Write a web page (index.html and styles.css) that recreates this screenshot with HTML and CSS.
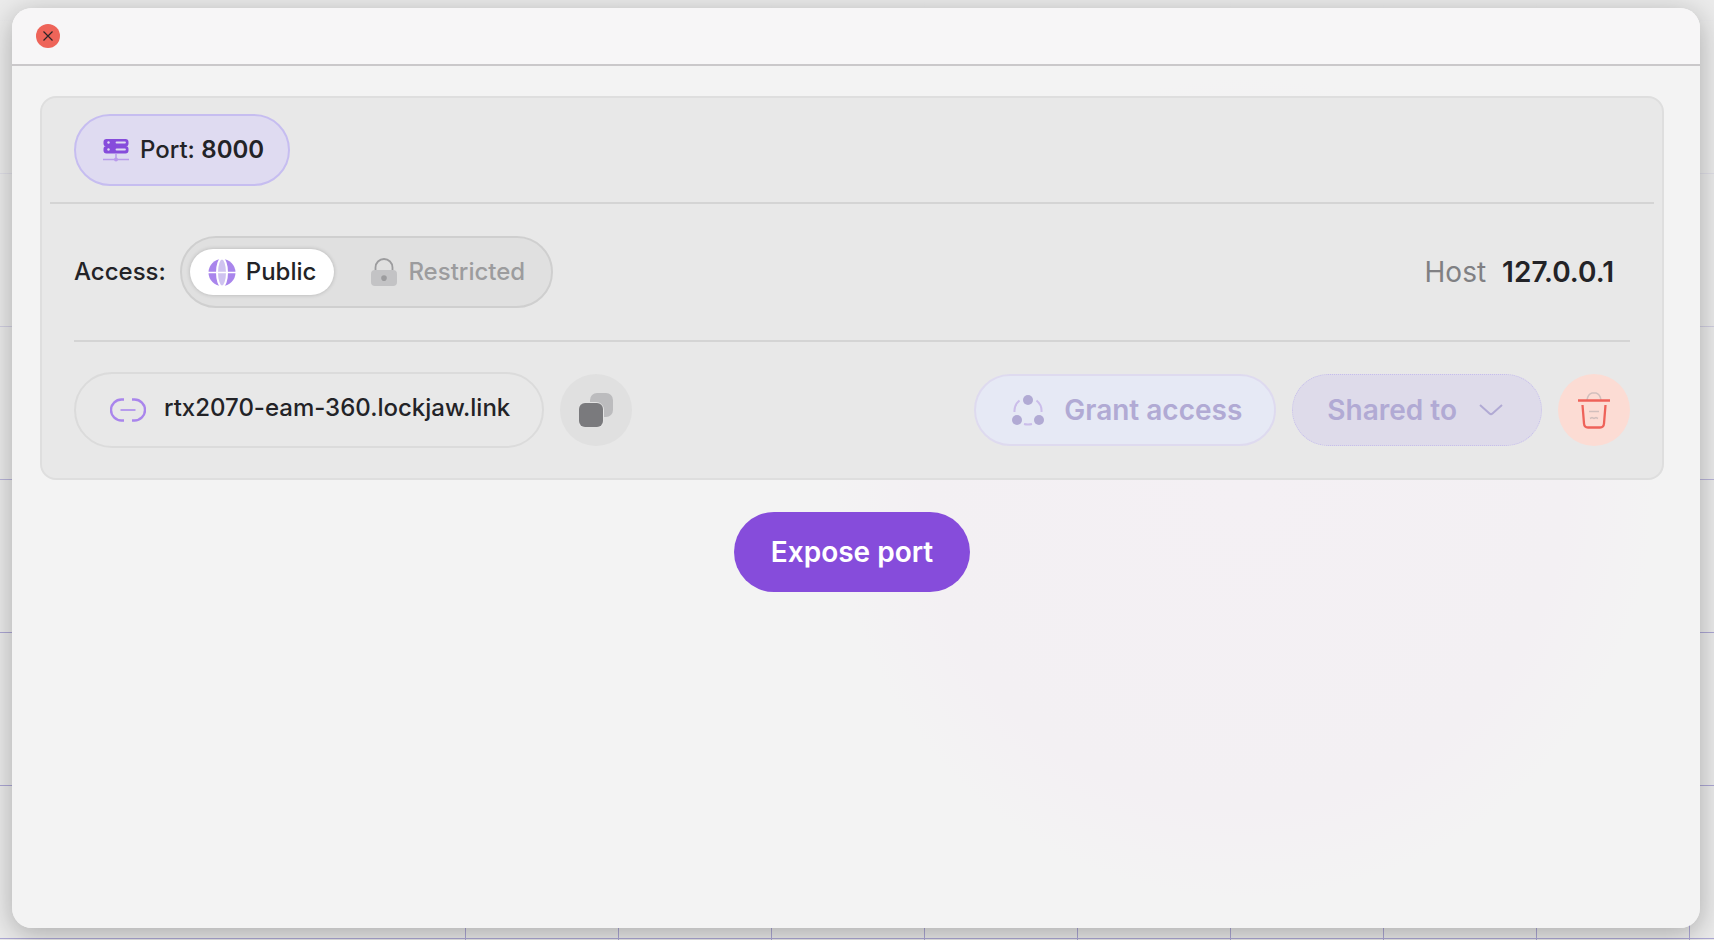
FILE: index.html
```html
<!DOCTYPE html>
<html lang="en">
<head>
<meta charset="utf-8">
<meta name="viewport" content="width=device-width, initial-scale=1">
<title>Exposed ports</title>
<link rel="stylesheet" href="styles.css">
</head>
<body>
<main class="window">
  <header class="titlebar">
    <button class="close" type="button" aria-label="Close">
      <svg viewBox="0 0 24 24" aria-hidden="true"><path d="M7.500 7.500L16.500 16.500M16.500 7.500L7.500 16.500"/></svg>
    </button>
  </header>
  <div class="content">
    <section class="card">
      <div class="port-row">
        <div class="port">
          <svg class="icon-server" viewBox="0 0 28 24" aria-hidden="true">
            <rect x="1.500" y="1" width="25" height="7.500" rx="3" fill="#864cdb"/>
            <rect x="1.500" y="8" width="25" height="7.500" rx="3" fill="#864cdb"/>
            <path d="M14.500 4.500H23M14.500 11.500H23" stroke="#dfdbf1" stroke-width="1.800" stroke-linecap="round"/>
            <circle cx="6.500" cy="4.500" r="1.200" fill="#dfdbf1"/><circle cx="6.500" cy="11.500" r="1.200" fill="#dfdbf1"/>
            <path d="M1 21.500h26M14 16v4" fill="none" stroke="#b99aeb" stroke-width="1.500"/>
            <circle cx="14" cy="21.500" r="2" fill="#b99aeb"/>
          </svg>
          <span>Port: <strong>8000</strong></span>
        </div>
      </div>
      <div class="access-row">
        <span class="access-label" id="access-label">Access:</span>
        <div class="toggle" role="group" aria-labelledby="access-label">
          <button class="option option-on" type="button" aria-pressed="true">
            <svg class="icon-globe" viewBox="0 0 28 28" aria-hidden="true">
              <circle cx="14" cy="14.500" r="13.500" fill="#a985ec"/>
              <ellipse cx="14" cy="14.500" rx="5" ry="14" fill="#cfc3f0" stroke="#fff" stroke-width="2"/>
              <path d="M0 14.500h28" stroke="#fff" stroke-width="1.500"/>
            </svg>
            Public
          </button>
          <button class="option" type="button" aria-pressed="false">
            <svg class="icon-lock" viewBox="0 0 28 28" aria-hidden="true">
              <path d="M5.500 12V9.500a8.500 8.500 0 0 1 17 0V12" fill="none" stroke="#9c9c9e" stroke-width="1.800"/>
              <rect x="1" y="12" width="26" height="16" rx="4" fill="#c3c3c5"/>
              <circle cx="14" cy="20" r="2.800" fill="#9c9c9e"/><path d="M12.500 20h3v3h-3z" fill="#9c9c9e"/>
            </svg>
            Restricted
          </button>
        </div>
        <p class="host">Host <strong>127.0.0.1</strong></p>
      </div>
      <div class="link-row">
        <a class="link" href="#">
          <svg class="icon-link" viewBox="0 0 36 24" aria-hidden="true">
            <path d="M14 1.500h-2.500a10.500 10.500 0 0 0 0 21H14M22 1.500h2.500a10.500 10.500 0 0 1 0 21H22" fill="none" stroke="#a985ec" stroke-width="2.400"/>
            <path d="M10.500 12h15" stroke="#b79cec" stroke-width="2"/>
          </svg>
          <span>rtx2070-eam-360.lockjaw.link</span>
        </a>
        <button class="round copy" type="button" aria-label="Copy link">
          <svg viewBox="0 0 34 34" aria-hidden="true">
            <rect x="11" y="0" width="23" height="24" rx="7" fill="#bcbcbe"/>
            <rect x="-1" y="9" width="26" height="27" rx="8" fill="#e4e4e4"/>
            <rect x="0" y="10" width="24" height="24" rx="6" fill="#7a7a7d"/>
          </svg>
        </button>
        <div class="actions">
          <button class="pill grant" type="button">
            <svg class="icon-share" viewBox="0 0 32 32" aria-hidden="true">
              <path d="M2.500 18a13.500 13.500 0 0 1 5-11.500M24.500 6.500a13.500 13.500 0 0 1 5 11.500M12 30q4 1 8 0" fill="none" stroke="#cbbdea" stroke-width="2"/>
              <g fill="#b1aad4"><circle cx="16" cy="6" r="5"/><circle cx="5" cy="26" r="5"/><circle cx="27" cy="26" r="5"/></g>
            </svg>
            Grant access
          </button>
          <button class="pill shared" type="button" aria-haspopup="true">
            Shared to
            <svg class="icon-chevron" viewBox="0 0 24 12" aria-hidden="true"><path d="M1 1L10.500 9.500Q12 10.800 13.500 9.500L23 1" fill="none" stroke="#b1aad4" stroke-width="2"/></svg>
          </button>
          <button class="round trash" type="button" aria-label="Delete">
            <svg viewBox="0 0 36 38" aria-hidden="true">
              <path d="M11 9q1-6 5-7h4q4 1 5 7M13 20.500h10M14 27.500l2-1 2 1 2-1 2 1" fill="none" stroke="#d2bfbd" stroke-width="1.500"/>
              <path d="M2 9.500h32M6.500 14L8 32.500q.3 4 4 4h12q3.700 0 4-4L29.500 14" fill="none" stroke="#ee6259" stroke-width="2.300"/>
            </svg>
          </button>
        </div>
      </div>
    </section>
    <button class="expose" type="button">Expose port</button>
  </div>
</main>
</body>
</html>
```
FILE: styles.css
```css
* {
  box-sizing: border-box;
}

body {
  margin: 0;
  min-height: 100vh;
  display: flex;
  padding: 8px 14px 12px 12px;
  font-family: Inter, "Liberation Sans", sans-serif;
  font-size: 24px;
  line-height: 32px;
  color: #232327;
  background-color: #ebebeb;
  background-image:
    linear-gradient(to bottom, #ebebeb 0, rgba(235, 235, 235, 0.7) 30%, rgba(235, 235, 235, 0) 60%),
    repeating-linear-gradient(to right, #aca7d4 0 1px, transparent 1px 153px),
    repeating-linear-gradient(to bottom, #aca7d4 0 1px, transparent 1px 153px);
  background-position: 0 0, 465px 0, 0 20px;
  background-repeat: no-repeat;
}

button {
  margin: 0;
  padding: 0;
  border: 0;
  font: inherit;
  color: inherit;
  background: none;
  cursor: pointer;
}

svg {
  display: block;
  flex: none;
}

strong {
  font-weight: 600;
}

.window {
  flex: 1;
  border-radius: 20px;
  overflow: hidden;
  background: radial-gradient(circle at 1232px 480px, #f4f0f4 0, #f3f0f3 320px, #f3f3f3 410px);
  box-shadow: 0 6px 28px rgba(0, 0, 0, 0.28);
}

.titlebar {
  height: 58px;
  padding: 16px 24px;
  border-bottom: 2px solid #cac8ca;
  background: #f7f6f7;
}

.close {
  display: block;
  width: 24px;
  height: 24px;
  border-radius: 50%;
  background: #ee6459;
}

.close svg {
  width: 24px;
  height: 24px;
  fill: none;
  stroke: #2c2427;
  stroke-width: 1.2;
}

.content {
  display: flex;
  flex-direction: column;
  gap: 32px;
  padding: 30px 36px 30px 28px;
}

.card {
  border: 2px solid #dedede;
  border-radius: 16px;
  background: #e8e8e8;
}

.port-row {
  margin: 0 8px;
  padding: 16px 24px;
  border-bottom: 2px solid #d4d4d4;
}

.port {
  display: inline-flex;
  align-items: center;
  vertical-align: top;
  gap: 10px;
  height: 72px;
  padding: 0 24px 0 26px;
  border: 2px solid #c6bdf0;
  border-radius: 36px;
  font-weight: 500;
  background: #dfdbf1;
}

.icon-server {
  width: 28px;
  height: 24px;
}

.access-row {
  display: flex;
  align-items: center;
  margin: 0 32px;
  padding: 32px 16px 32px 0;
  border-bottom: 2px solid #d4d4d4;
}

.access-label {
  font-weight: 500;
}

.toggle {
  display: flex;
  align-items: center;
  gap: 18px;
  height: 72px;
  margin-left: 14px;
  padding: 0 8px;
  border: 2px solid #cfcfcf;
  border-radius: 36px;
  background: #e0e0e0;
}

.option {
  display: flex;
  align-items: center;
  gap: 10px;
  height: 46px;
  padding: 0 18px;
  border-radius: 23px;
  font-weight: 500;
  color: #9c9c9e;
}

.option-on {
  color: #232327;
  background: #fff;
  box-shadow: 0 0 4px rgba(0, 0, 0, 0.2);
}

.icon-globe,
.icon-lock {
  width: 28px;
  height: 28px;
}

.host {
  display: flex;
  gap: 16px;
  margin: 0 0 0 auto;
  font-size: 28px;
  color: #808083;
}

.host strong {
  color: #232327;
}

.link-row {
  display: flex;
  align-items: center;
  gap: 16px;
  padding: 30px 32px;
}

.link {
  display: flex;
  align-items: center;
  gap: 18px;
  height: 76px;
  padding: 0 32px 0 34px;
  border: 2px solid #dbdbdb;
  border-radius: 38px;
  font-weight: 500;
  color: inherit;
  text-decoration: none;
}

.link span {
  padding-bottom: 4px;
}

.icon-link {
  width: 36px;
  height: 24px;
}

.round {
  display: grid;
  place-items: center;
  width: 72px;
  height: 72px;
  border-radius: 50%;
}

.copy {
  background: #e0e0e0;
}

.copy svg {
  width: 34px;
  height: 34px;
}

.actions {
  display: flex;
  gap: 16px;
  margin-left: auto;
}

.pill {
  display: flex;
  align-items: center;
  gap: 20px;
  height: 72px;
  border: 2px solid #dedaef;
  border-radius: 36px;
  font-size: 28px;
  font-weight: 600;
  color: #b1aad4;
}

.grant {
  padding: 0 32px 0 36px;
  background: #e6e9f5;
}

.shared {
  gap: 22px;
  padding: 0 38px 0 34px;
  border: 1px dotted #c5bdec;
  background: #dedbea;
}

.icon-share {
  width: 32px;
  height: 32px;
}

.icon-chevron {
  width: 24px;
  height: 12px;
}

.trash {
  background: #fcdcd4;
}

.trash svg {
  width: 36px;
  height: 38px;
}

.expose {
  align-self: center;
  height: 80px;
  padding: 0 37px;
  border-radius: 40px;
  font-size: 28px;
  font-weight: 600;
  color: #fff;
  background: #864cdb;
}
```
